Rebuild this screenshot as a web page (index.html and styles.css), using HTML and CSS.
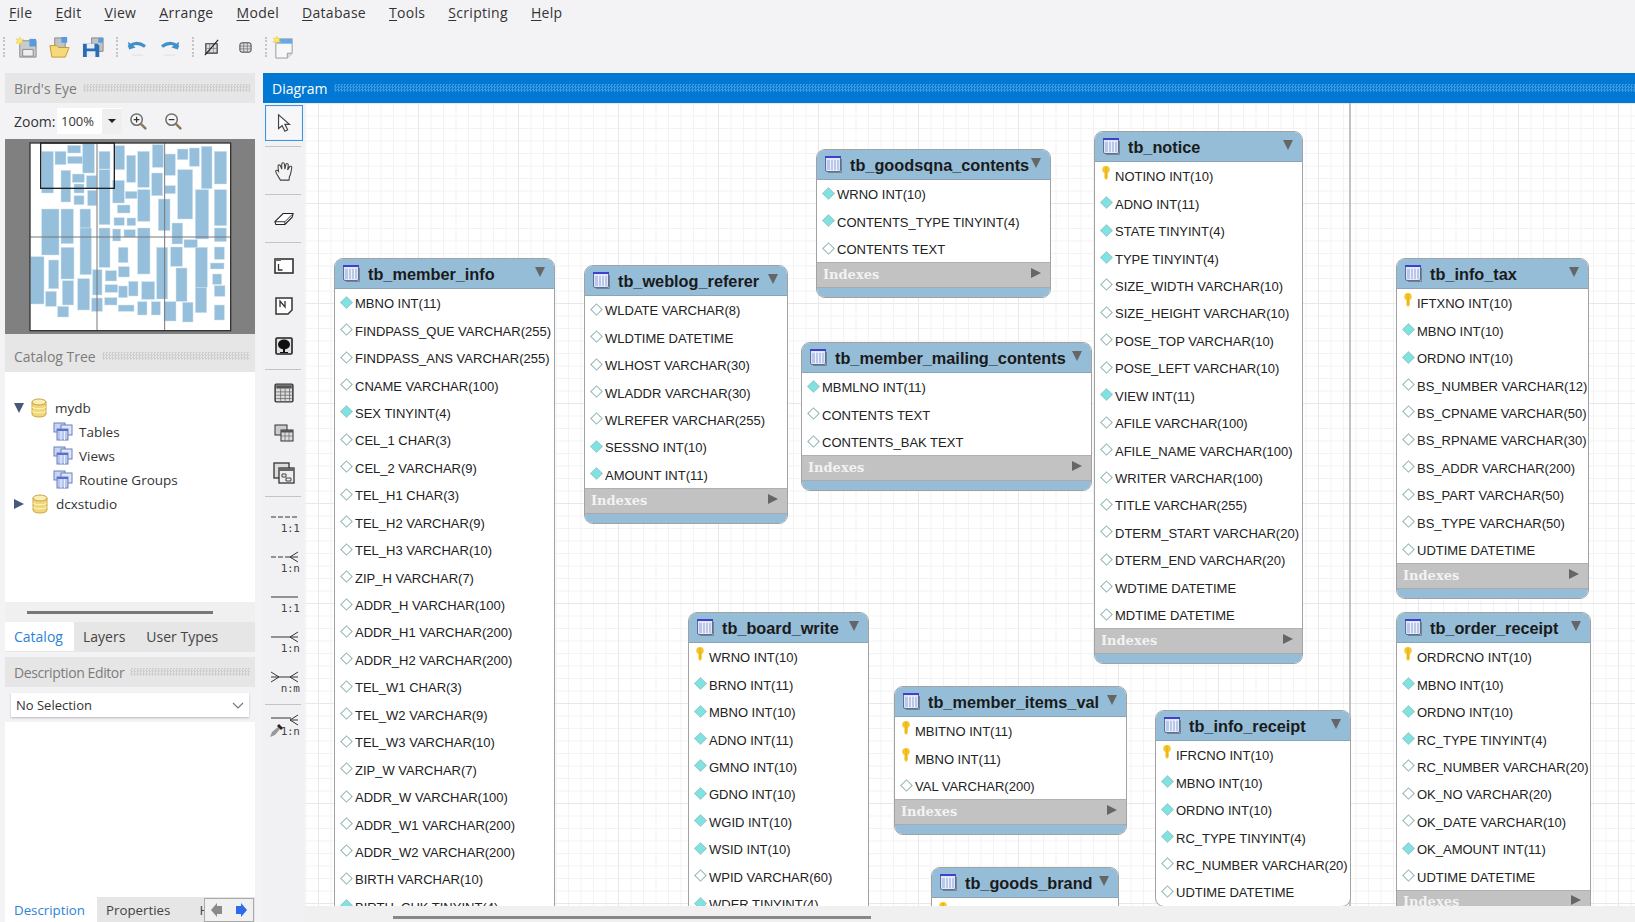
FILE: index.html
```html
<!DOCTYPE html>
<html lang="en">
<head>
<meta charset="utf-8">
<title>MySQL Workbench - EER Diagram</title>
<link rel="stylesheet" href="styles.css">
</head>
<body>
<svg class="defs" aria-hidden="true">
  <symbol id="key" viewBox="0 0 8 14"><path d="M4 0a3.800 3.800 0 0 1 3.800 3.800c0 1.600-.9 2.700-2 3.200v5L4 14l-1.600-2V7C1.100 6.500.2 5.400.2 3.800A3.800 3.800 0 0 1 4 0z" fill="#f6c72a"/><path d="M4 1v11" stroke="#e09f10" stroke-width=".8"/></symbol>
  <symbol id="tbl" viewBox="0 0 18 18"><rect x="1.500" y="1.500" width="15" height="15" rx="1.500" fill="#dfe6f5" stroke="#5a6f9a"/><rect x="1" y="1" width="16" height="2" fill="#3f3fd0"/><path d="M3 5h12v10H3z" fill="#b9c8ea"/><path d="M6.500 4v11.500M9.500 4v11.500M12.500 4v11.500" stroke="#eef2fb"/><path d="M4 17.500h13.500V4" stroke="#7b8188" fill="none"/></symbol>
  <symbol id="db" viewBox="0 0 16 20"><path d="M1 4v12c0 4 14 4 14 0V4z" fill="#f2d67a" stroke="#c9a440"/><ellipse cx="8" cy="4" rx="7" ry="3" fill="#fbeeb5" stroke="#c9a440"/><path d="M1 8.500c0 3 14 3 14 0M1 12.500c0 3 14 3 14 0" fill="none" stroke="#fff6c9"/></symbol>
  <symbol id="grp" viewBox="0 0 20 20"><rect x="1" y="1" width="11" height="9" fill="#c8d4f0" stroke="#6a80c0"/><rect x="8" y="3" width="11" height="10" fill="#dfe6f7" stroke="#6a80c0"/><rect x="4" y="7" width="11" height="11" fill="#b7c7ec" stroke="#6a80c0"/><path d="M4 7h11v2H4z" fill="#5b6fd0"/><path d="M8 9v9M11.500 9v9" stroke="#eef2fb"/></symbol>
  <symbol id="mag" viewBox="0 0 20 20"><circle cx="8" cy="8" r="6" fill="#f6f6f6" stroke="#6e6e6e" stroke-width="1.600"/><path d="M12.500 12.500l5.500 5.500" stroke="#8a7a55" stroke-width="2.600"/></symbol>
  <symbol id="crow" viewBox="0 0 30 12"><path d="M20 6l8-5M20 6h8M20 6l8 5" fill="none" stroke="#333"/></symbol>
</svg>

<nav class="menubar">
  <span><u>F</u>ile</span><span><u>E</u>dit</span><span><u>V</u>iew</span><span><u>A</u>rrange</span><span><u>M</u>odel</span><span><u>D</u>atabase</span><span><u>T</u>ools</span><span><u>S</u>cripting</span><span><u>H</u>elp</span>
</nav>

<div class="toolbar">
  <i class="grip"></i>
  <svg class="ti" viewBox="0 0 24 24"><path d="M5 5h17v17H5z" fill="#c9ccce" stroke="#8a8a8a"/><path d="M15 3h7v8h-7z" fill="#5a9be0"/><path d="M8 14h11v7H8z" fill="#eee" stroke="#888"/><path d="M5 1l1.200 2.600L9 3 7.200 5.200 9 7.500 6 7 5 9.500 4 7 1 7.500 2.800 5.200 1 3l2.800.6z" fill="#fbe96a" stroke="#e5c93a" stroke-width=".5"/></svg>
  <svg class="ti" viewBox="0 0 24 24"><path d="M7 2h11v12H7z" fill="#bfc3c6" stroke="#8a8a8a"/><path d="M14 1h6v6h-6z" fill="#5a9be0"/><path d="M2 10h7l2 2h11l-4 10H4z" fill="#f6d978" stroke="#c99a20"/></svg>
  <svg class="ti" viewBox="0 0 24 24"><path d="M10 2h12v14H10z" fill="#bfc3c6" stroke="#8a8a8a"/><path d="M17 2h5v5h-5z" fill="#5a9be0"/><path d="M1 8h15l2 2v12H1z" fill="#2b6cb5"/><path d="M5 8h8v5H5zM5 16h9v6H5z" fill="#e9eef5"/></svg>
  <i class="tsep"></i>
  <svg class="ti small" viewBox="0 0 22 18"><path d="M2 9c3-5 10-6 17-1" fill="none" stroke="#3f8fc9" stroke-width="3.400"/><path d="M1 3l1 8 7-2z" fill="#3f8fc9"/><path d="M5 17h12" stroke="#dedede"/></svg>
  <svg class="ti small" viewBox="0 0 22 18"><path d="M20 9C17 4 10 3 3 8" fill="none" stroke="#3f8fc9" stroke-width="3.400"/><path d="M21 3l-1 8-7-2z" fill="#3f8fc9"/><path d="M5 17h12" stroke="#dedede"/></svg>
  <i class="tsep"></i>
  <svg class="ti tiny" viewBox="0 0 18 18"><path d="M3 5h12v10H3z" fill="#ddd" stroke="#333" stroke-width="1.200"/><path d="M7 5v10M11 5v10M3 10h12" stroke="#777" stroke-width=".7"/><path d="M2 17L16 1" stroke="#222" stroke-width="1.300"/></svg>
  <svg class="ti grid" viewBox="0 0 14 14"><rect x="1" y="2" width="12" height="10" rx="2" fill="#ddd" stroke="#333"/><path d="M5 2v10M9 2v10M1 5.500h12M1 8.500h12" stroke="#666" stroke-width=".7"/></svg>
  <i class="tsep"></i>
  <svg class="ti note" viewBox="0 0 24 24"><path d="M4 3h17v15l-5 5H4z" fill="#f7f7f7" stroke="#9a9a9a"/><path d="M4 3h17v5H4z" fill="#6aa7e5"/><path d="M16 23v-5h5" fill="#ddd" stroke="#9a9a9a"/><path d="M5 0l1.200 2.600L9 2 7.200 4.200 9 6.500 6 6 5 8.500 4 6 1 6.500 2.800 4.200 1 2l2.800.6z" fill="#fbe96a" stroke="#e5c93a" stroke-width=".5"/></svg>
</div>

<main class="workspace">
  <aside class="sidebar">
    <header class="phead"><span>Bird's Eye</span><i class="dots"></i></header>
    <div class="zoomrow">
      <span class="zlabel">Zoom:</span>
      <div class="zbox"><span>100%</span><b class="zdrop"><i></i></b></div>
      <svg class="zicon" viewBox="0 0 20 20"><use href="#mag"/><path d="M5 8h6M8 5v6" stroke="#333" stroke-width="1.300"/></svg>
      <svg class="zicon" viewBox="0 0 20 20"><use href="#mag"/><path d="M5 8h6" stroke="#333" stroke-width="1.300"/></svg>
    </div>
    <svg class="birdseye" viewBox="15 28 750 585">
      <rect x="15" y="28" width="750" height="585" fill="#808080"/>
      <rect x="90" y="40" width="602" height="563" fill="#fff"/>
      <g class="be">
        <rect x="125" y="65" width="35" height="125"/><rect x="165" y="65" width="33" height="40"/><rect x="203" y="47" width="39" height="23"/><rect x="203" y="80" width="45" height="22"/><rect x="248" y="42" width="35" height="88"/><rect x="297" y="65" width="33" height="53"/><rect x="297" y="120" width="33" height="165"/><rect x="345" y="48" width="29" height="72"/><rect x="380" y="77" width="27" height="81"/><rect x="413" y="65" width="35" height="108"/><rect x="457" y="45" width="33" height="68"/><rect x="495" y="73" width="31" height="64"/><rect x="532" y="58" width="32" height="32"/><rect x="568" y="55" width="30" height="55"/><rect x="604" y="50" width="32" height="127"/><rect x="643" y="65" width="37" height="98"/><rect x="183" y="122" width="29" height="95"/><rect x="217" y="133" width="36" height="25"/><rect x="222" y="163" width="30" height="27"/><rect x="222" y="198" width="30" height="27"/><rect x="259" y="138" width="31" height="37"/><rect x="263" y="182" width="27" height="46"/><rect x="338" y="152" width="35" height="68"/><rect x="376" y="185" width="35" height="22"/><rect x="413" y="180" width="37" height="95"/><rect x="455" y="130" width="33" height="68"/><rect x="495" y="168" width="31" height="24"/><rect x="533" y="120" width="45" height="148"/><rect x="586" y="180" width="40" height="148"/><rect x="643" y="180" width="37" height="108"/><rect x="352" y="226" width="38" height="24"/><rect x="342" y="264" width="31" height="23"/><rect x="381" y="265" width="26" height="23"/><rect x="475" y="208" width="35" height="95"/><rect x="516" y="280" width="32" height="63"/><rect x="125" y="238" width="52" height="138"/><rect x="183" y="238" width="37" height="104"/><rect x="240" y="238" width="32" height="57"/><rect x="240" y="295" width="34" height="140"/><rect x="297" y="295" width="33" height="118"/><rect x="338" y="298" width="24" height="36"/><rect x="372" y="300" width="34" height="22"/><rect x="413" y="295" width="37" height="138"/><rect x="643" y="295" width="36" height="41"/><rect x="552" y="330" width="40" height="24"/><rect x="643" y="352" width="30" height="37"/><rect x="355" y="353" width="29" height="46"/><rect x="183" y="353" width="39" height="95"/><rect x="470" y="353" width="33" height="155"/><rect x="512" y="352" width="35" height="58"/><rect x="586" y="353" width="36" height="120"/><rect x="586" y="473" width="34" height="76"/><rect x="92" y="381" width="40" height="142"/><rect x="146" y="391" width="30" height="86"/><rect x="631" y="400" width="41" height="18"/><rect x="278" y="420" width="28" height="76"/><rect x="316" y="423" width="34" height="31"/><rect x="355" y="411" width="33" height="31"/><rect x="528" y="415" width="33" height="100"/><rect x="638" y="433" width="27" height="31"/><rect x="187" y="453" width="34" height="73"/><rect x="233" y="447" width="36" height="94"/><rect x="386" y="455" width="28" height="44"/><rect x="425" y="456" width="39" height="53"/><rect x="643" y="468" width="32" height="32"/><rect x="315" y="465" width="38" height="23"/><rect x="356" y="469" width="26" height="35"/><rect x="137" y="485" width="32" height="45"/><rect x="275" y="505" width="32" height="40"/><rect x="314" y="504" width="37" height="22"/><rect x="355" y="526" width="47" height="19"/><rect x="413" y="516" width="28" height="40"/><rect x="454" y="516" width="27" height="40"/><rect x="492" y="516" width="36" height="58"/><rect x="548" y="518" width="31" height="59"/><rect x="173" y="530" width="33" height="32"/><rect x="643" y="526" width="30" height="45"/>
      </g>
      <path d="M291 40v563M494 40v563M90 322h602" stroke="#777" stroke-width="3" fill="none"/>
      <rect x="90" y="40" width="602" height="563" fill="none" stroke="#333" stroke-width="4"/>
      <rect x="122" y="40" width="221" height="136" fill="none" stroke="#222" stroke-width="4"/>
    </svg>

    <header class="phead tall"><span>Catalog Tree</span><i class="dots"></i></header>
    <div class="tree">
      <div class="node"><i class="tw down"></i><svg class="dbi"><use href="#db"/></svg><span>mydb</span></div>
      <div class="node child"><svg class="gi"><use href="#grp"/></svg><span>Tables</span></div>
      <div class="node child"><svg class="gi"><use href="#grp"/></svg><span>Views</span></div>
      <div class="node child"><svg class="gi"><use href="#grp"/></svg><span>Routine Groups</span></div>
      <div class="node"><i class="tw right"></i><svg class="dbi"><use href="#db"/></svg><span>dcxstudio</span></div>
    </div>
    <div class="hscroll"><i></i></div>
    <div class="tabs">
      <span class="tab active">Catalog</span><span class="tab">Layers</span><span class="tab">User Types</span>
    </div>
    <header class="phead gapped"><span>Description Editor</span><i class="dots"></i></header>
    <div class="selrow"><div class="select"><span>No Selection</span><svg viewBox="0 0 12 7"><path d="M1 1l5 5 5-5" fill="none" stroke="#777" stroke-width="1.200"/></svg></div></div>
    <div class="desc"></div>
    <div class="tabs bottom">
      <span class="tab active">Description</span><span class="tab">Properties</span><span class="tab clipped">H</span>
      <div class="navbox">
        <svg viewBox="0 0 12 14"><path d="M11 3H6V0L0 7l6 7v-3h5z" fill="#8a8a8a"/></svg>
        <svg viewBox="0 0 12 14"><path d="M1 3h5V0l6 7-6 7v-3H1z" fill="#2f6be8"/></svg>
      </div>
    </div>
  </aside>

  <section class="diagram">
    <header class="dhead"><span>Diagram</span><i class="dots blue"></i></header>
    <div class="dbody">
      <div class="tools">
        <div class="tool selected"><svg viewBox="0 0 18 22"><path d="M3 2v15l4-3 3 6 3-1.500-3-6h5z" fill="#fff" stroke="#444" stroke-width="1.300"/></svg></div>
        <i class="sep"></i>
        <div class="tool wide"><svg viewBox="0 0 20 22"><path d="M6 21c-1-2-4-6-5-9-.5-2 1.500-2.500 3-.5L3.500 6c-.3-2 2-2.500 2.700-.5L7.500 9V3.500c0-2 2.800-2 3 0L11 9l1-5c.4-1.800 2.800-1.500 2.700.5L14 10l2-3.500c1-1.500 3-.5 2.500 1.200C18 10 17.500 15 16 17l-.5 4z" fill="#f4f4f4" stroke="#444" stroke-width="1.200"/></svg></div>
        <i class="sep"></i>
        <div class="tool wide"><svg viewBox="0 0 22 16"><path d="M1 11L10 2h11l-1 4-8 8H2z" fill="#fff" stroke="#222" stroke-width="1.200"/><path d="M1 11h11l8-8M12 11v3" fill="none" stroke="#222"/></svg></div>
        <i class="sep"></i>
        <div class="group">
          <div class="tool"><svg viewBox="0 0 20 18"><rect x="1" y="2" width="18" height="14" fill="#fff" stroke="#333" stroke-width="1.600"/><path d="M1 2h6v2H1z" fill="#666"/><path d="M4.500 7v6h4" fill="none" stroke="#333" stroke-width="1.300"/></svg></div>
          <div class="tool"><svg viewBox="0 0 20 20"><path d="M2 2h16v12l-4 4H2z" fill="#fff" stroke="#333" stroke-width="1.500"/><path d="M6 11V5l5 6V5" fill="none" stroke="#333" stroke-width="1.300"/></svg></div>
          <div class="tool"><svg viewBox="0 0 20 20"><rect x="2" y="2" width="16" height="16" rx="1" fill="#e2e2e2" stroke="#222" stroke-width="1.600"/><ellipse cx="10" cy="8.500" rx="6" ry="5" fill="#111"/><path d="M9 12h2v4H9zM6 16h8v1H6z" fill="#111"/></svg></div>
        </div>
        <i class="sep"></i>
        <div class="group">
          <div class="tool"><svg viewBox="0 0 18 18"><rect x="1" y="1" width="16" height="16" rx="1" fill="#ddd" stroke="#333" stroke-width="1.300"/><path d="M2 2h14v3H2z" fill="#555"/><path d="M6 5v11M10 5v11M14 5v11M2 8h14M2 11h14M2 14h14" stroke="#666" stroke-width=".7"/></svg></div>
          <div class="tool"><svg viewBox="0 0 20 18"><rect x="1" y="1" width="12" height="10" fill="#ccc" stroke="#333"/><rect x="7" y="6" width="12" height="11" fill="#ddd" stroke="#333"/><path d="M7 6h12v2.500H7z" fill="#555"/><path d="M11 8v9M15 8v9M7 12h12" stroke="#666" stroke-width=".7"/></svg></div>
          <div class="tool big"><svg viewBox="0 0 22 22"><rect x="1" y="1" width="15" height="15" fill="#ddd" stroke="#333" stroke-width="1.300"/><rect x="6" y="6" width="15" height="15" fill="#eee" stroke="#333" stroke-width="1.300"/><path d="M6 6h15v3H6z" fill="#666"/><path d="M9 12h4v3H9zM13 16h5v3h-5z" fill="none" stroke="#444"/></svg></div>
        </div>
        <i class="sep"></i>
        <div class="group rels">
          <div class="rel"><svg viewBox="0 0 30 6"><path d="M1 3h27" stroke="#333" stroke-dasharray="5 2"/></svg><b>1:1</b></div>
          <div class="rel"><svg viewBox="0 0 30 12"><use href="#crow"/><path d="M1 6h20" stroke="#333" stroke-dasharray="5 2"/></svg><b>1:n</b></div>
          <div class="rel"><svg viewBox="0 0 30 6"><path d="M1 3h27" stroke="#333"/></svg><b>1:1</b></div>
          <div class="rel"><svg viewBox="0 0 30 12"><use href="#crow"/><path d="M1 6h20" stroke="#333"/></svg><b>1:n</b></div>
          <div class="rel"><svg viewBox="0 0 30 12"><use href="#crow"/><path d="M1 6h20M9 6L1 1M9 6L1 11" stroke="#333" fill="none"/></svg><b>n:m</b></div>
        </div>
        <i class="sep"></i>
        <div class="rel pick"><svg viewBox="0 0 30 12"><use href="#crow"/><path d="M1 4h20" stroke="#333"/></svg><svg class="drop" viewBox="0 0 14 14"><path d="M1 13l2-5 6-5 2 2-5 6z" fill="#999"/><path d="M8 2l2-2 4 4-2 2z" fill="#222"/></svg><b>1:n</b></div>
      </div>

      <div class="canvaswrap">
        <div class="canvas">
          <i class="pageline"></i>

          <article class="tb t-member">
            <h3><svg><use href="#tbl"/></svg><span>tb_member_info</span><i class="tri"></i></h3>
            <ul>
              <li><i class="dm f"></i>MBNO INT(11)</li><li><i class="dm"></i>FINDPASS_QUE VARCHAR(255)</li><li><i class="dm"></i>FINDPASS_ANS VARCHAR(255)</li><li><i class="dm"></i>CNAME VARCHAR(100)</li><li><i class="dm f"></i>SEX TINYINT(4)</li><li><i class="dm"></i>CEL_1 CHAR(3)</li><li><i class="dm"></i>CEL_2 VARCHAR(9)</li><li><i class="dm"></i>TEL_H1 CHAR(3)</li><li><i class="dm"></i>TEL_H2 VARCHAR(9)</li><li><i class="dm"></i>TEL_H3 VARCHAR(10)</li><li><i class="dm"></i>ZIP_H VARCHAR(7)</li><li><i class="dm"></i>ADDR_H VARCHAR(100)</li><li><i class="dm"></i>ADDR_H1 VARCHAR(200)</li><li><i class="dm"></i>ADDR_H2 VARCHAR(200)</li><li><i class="dm"></i>TEL_W1 CHAR(3)</li><li><i class="dm"></i>TEL_W2 VARCHAR(9)</li><li><i class="dm"></i>TEL_W3 VARCHAR(10)</li><li><i class="dm"></i>ZIP_W VARCHAR(7)</li><li><i class="dm"></i>ADDR_W VARCHAR(100)</li><li><i class="dm"></i>ADDR_W1 VARCHAR(200)</li><li><i class="dm"></i>ADDR_W2 VARCHAR(200)</li><li><i class="dm"></i>BIRTH VARCHAR(10)</li><li><i class="dm f"></i>BIRTH_CHK TINYINT(4)</li>
            </ul>
          </article>

          <article class="tb t-weblog">
            <h3><svg><use href="#tbl"/></svg><span>tb_weblog_referer</span><i class="tri"></i></h3>
            <ul>
              <li><i class="dm"></i>WLDATE VARCHAR(8)</li><li><i class="dm"></i>WLDTIME DATETIME</li><li><i class="dm"></i>WLHOST VARCHAR(30)</li><li><i class="dm"></i>WLADDR VARCHAR(30)</li><li><i class="dm"></i>WLREFER VARCHAR(255)</li><li><i class="dm f"></i>SESSNO INT(10)</li><li><i class="dm f"></i>AMOUNT INT(11)</li>
            </ul>
            <div class="idx"><span>Indexes</span><i class="tri r"></i></div><div class="foot"></div>
          </article>

          <article class="tb t-qna">
            <h3><svg><use href="#tbl"/></svg><span>tb_goodsqna_contents</span><i class="tri"></i></h3>
            <ul>
              <li><i class="dm f"></i>WRNO INT(10)</li><li><i class="dm f"></i>CONTENTS_TYPE TINYINT(4)</li><li><i class="dm"></i>CONTENTS TEXT</li>
            </ul>
            <div class="idx"><span>Indexes</span><i class="tri r"></i></div><div class="foot"></div>
          </article>

          <article class="tb t-notice">
            <h3><svg><use href="#tbl"/></svg><span>tb_notice</span><i class="tri"></i></h3>
            <ul>
              <li><svg class="ky"><use href="#key"/></svg>NOTINO INT(10)</li><li><i class="dm f"></i>ADNO INT(11)</li><li><i class="dm f"></i>STATE TINYINT(4)</li><li><i class="dm f"></i>TYPE TINYINT(4)</li><li><i class="dm"></i>SIZE_WIDTH VARCHAR(10)</li><li><i class="dm"></i>SIZE_HEIGHT VARCHAR(10)</li><li><i class="dm"></i>POSE_TOP VARCHAR(10)</li><li><i class="dm"></i>POSE_LEFT VARCHAR(10)</li><li><i class="dm f"></i>VIEW INT(11)</li><li><i class="dm"></i>AFILE VARCHAR(100)</li><li><i class="dm"></i>AFILE_NAME VARCHAR(100)</li><li><i class="dm"></i>WRITER VARCHAR(100)</li><li><i class="dm"></i>TITLE VARCHAR(255)</li><li><i class="dm"></i>DTERM_START VARCHAR(20)</li><li><i class="dm"></i>DTERM_END VARCHAR(20)</li><li><i class="dm"></i>WDTIME DATETIME</li><li><i class="dm"></i>MDTIME DATETIME</li>
            </ul>
            <div class="idx"><span>Indexes</span><i class="tri r"></i></div><div class="foot"></div>
          </article>

          <article class="tb t-mailing">
            <h3><svg><use href="#tbl"/></svg><span>tb_member_mailing_contents</span><i class="tri"></i></h3>
            <ul>
              <li><i class="dm f"></i>MBMLNO INT(11)</li><li><i class="dm"></i>CONTENTS TEXT</li><li><i class="dm"></i>CONTENTS_BAK TEXT</li>
            </ul>
            <div class="idx"><span>Indexes</span><i class="tri r"></i></div><div class="foot"></div>
          </article>

          <article class="tb t-tax">
            <h3><svg><use href="#tbl"/></svg><span>tb_info_tax</span><i class="tri"></i></h3>
            <ul>
              <li><svg class="ky"><use href="#key"/></svg>IFTXNO INT(10)</li><li><i class="dm f"></i>MBNO INT(10)</li><li><i class="dm f"></i>ORDNO INT(10)</li><li><i class="dm"></i>BS_NUMBER VARCHAR(12)</li><li><i class="dm"></i>BS_CPNAME VARCHAR(50)</li><li><i class="dm"></i>BS_RPNAME VARCHAR(30)</li><li><i class="dm"></i>BS_ADDR VARCHAR(200)</li><li><i class="dm"></i>BS_PART VARCHAR(50)</li><li><i class="dm"></i>BS_TYPE VARCHAR(50)</li><li><i class="dm"></i>UDTIME DATETIME</li>
            </ul>
            <div class="idx"><span>Indexes</span><i class="tri r"></i></div><div class="foot"></div>
          </article>

          <article class="tb t-order">
            <h3><svg><use href="#tbl"/></svg><span>tb_order_receipt</span><i class="tri"></i></h3>
            <ul>
              <li><svg class="ky"><use href="#key"/></svg>ORDRCNO INT(10)</li><li><i class="dm f"></i>MBNO INT(10)</li><li><i class="dm f"></i>ORDNO INT(10)</li><li><i class="dm f"></i>RC_TYPE TINYINT(4)</li><li><i class="dm"></i>RC_NUMBER VARCHAR(20)</li><li><i class="dm"></i>OK_NO VARCHAR(20)</li><li><i class="dm"></i>OK_DATE VARCHAR(10)</li><li><i class="dm f"></i>OK_AMOUNT INT(11)</li><li><i class="dm"></i>UDTIME DATETIME</li>
            </ul>
            <div class="idx"><span>Indexes</span><i class="tri r"></i></div><div class="foot"></div>
          </article>

          <article class="tb t-board">
            <h3><svg><use href="#tbl"/></svg><span>tb_board_write</span><i class="tri"></i></h3>
            <ul>
              <li><svg class="ky"><use href="#key"/></svg>WRNO INT(10)</li><li><i class="dm f"></i>BRNO INT(11)</li><li><i class="dm f"></i>MBNO INT(10)</li><li><i class="dm f"></i>ADNO INT(11)</li><li><i class="dm f"></i>GMNO INT(10)</li><li><i class="dm f"></i>GDNO INT(10)</li><li><i class="dm f"></i>WGID INT(10)</li><li><i class="dm f"></i>WSID INT(10)</li><li><i class="dm"></i>WPID VARCHAR(60)</li><li><i class="dm f"></i>WDER TINYINT(4)</li>
            </ul>
          </article>

          <article class="tb t-items">
            <h3><svg><use href="#tbl"/></svg><span>tb_member_items_val</span><i class="tri"></i></h3>
            <ul>
              <li><svg class="ky"><use href="#key"/></svg>MBITNO INT(11)</li><li><svg class="ky"><use href="#key"/></svg>MBNO INT(11)</li><li><i class="dm"></i>VAL VARCHAR(200)</li>
            </ul>
            <div class="idx"><span>Indexes</span><i class="tri r"></i></div><div class="foot"></div>
          </article>

          <article class="tb t-receipt">
            <h3><svg><use href="#tbl"/></svg><span>tb_info_receipt</span><i class="tri"></i></h3>
            <ul>
              <li><svg class="ky"><use href="#key"/></svg>IFRCNO INT(10)</li><li><i class="dm f"></i>MBNO INT(10)</li><li><i class="dm f"></i>ORDNO INT(10)</li><li><i class="dm f"></i>RC_TYPE TINYINT(4)</li><li><i class="dm"></i>RC_NUMBER VARCHAR(20)</li><li><i class="dm"></i>UDTIME DATETIME</li>
            </ul>
          </article>

          <article class="tb t-brand">
            <h3><svg><use href="#tbl"/></svg><span>tb_goods_brand</span><i class="tri"></i></h3>
            <ul>
              <li><svg class="ky"><use href="#key"/></svg>BRNO INT(10)</li>
            </ul>
          </article>
        </div>
        <div class="cscroll"><i></i></div>
      </div>
    </div>
  </section>
</main>
</body>
</html>
```
FILE: styles.css
```css
* { box-sizing: border-box; }
html, body { margin: 0; height: 100%; overflow: hidden; }
body {
  width: 1635px; height: 922px;
  background: #f3f3f6;
  font-family: "Open Sans", "Noto Sans", sans-serif;
  font-size: 14px;
  color: #333;
  display: flex; flex-direction: column;
}
i { display: block; font-style: normal; }
.defs { position: absolute; width: 0; height: 0; }

.menubar { height: 25px; display: flex; align-items: center; gap: 23px; padding-left: 9px; font-size: 14px; letter-spacing: .3px; color: #333; }
.menubar u { text-underline-offset: 2px; }

.toolbar { height: 48px; display: flex; align-items: center; padding: 0 0 4px 3px; }
.grip { width: 2px; height: 20px; border-left: 2px dotted #c4c4c8; margin-right: 9.500px; flex: none; }
.ti { width: 23px; height: 23px; margin-right: 10.500px; flex: none; }
.ti.small { width: 21px; height: 17px; margin: 0 11px 0 0; }
.ti.tiny { width: 17px; height: 17px; margin: 0 18.500px 0 0; }
.ti.grid { width: 13px; height: 13px; margin: 0 12px 0 0; }
.ti.note { margin-left: -4px; }
.tsep { width: 2px; height: 20px; border-left: 2px dotted #c4c4c8; margin: 0 9px 0 1px; flex: none; }

.workspace { flex: 1; display: flex; gap: 8px; padding-left: 5px; min-height: 0; }

.sidebar { width: 250px; display: flex; flex-direction: column; }
.phead { height: 30px; background: #e6e6e6; display: flex; align-items: center; gap: 6px; padding: 0 5px 0 9px; color: #7c7c7c; font-size: 14px; white-space: nowrap; }
.phead.tall { height: 38px; padding-top: 6px; }
.phead.gapped { margin-top: 5px; letter-spacing: -.4px; }
.dots { flex: 1; height: 8px; background: repeating-conic-gradient(#cfcfcf 0 25%, transparent 0 50%) 0 0 / 3px 3px; }
.dots.blue { background: repeating-conic-gradient(#3d9ae0 0 25%, transparent 0 50%) 0 0 / 3px 3px; }

.zoomrow { height: 36px; display: flex; align-items: center; padding-left: 9px; }
.zlabel { width: 43px; }
.zbox { width: 65px; height: 26px; background: #fff; display: flex; align-items: center; justify-content: space-between; padding-left: 4px; font-size: 13px; }
.zdrop { width: 20px; height: 25px; background: #efefef; display: flex; align-items: center; justify-content: center; }
.zdrop i { border: 4px solid transparent; border-top: 4px solid #222; border-bottom: 0; }
.zicon { width: 19px; height: 19px; margin-left: 16px; }
.zbox + .zicon { margin-left: 7px; }

.birdseye { width: 250px; height: 195px; display: block; flex: none; }
.be rect { fill: #95bfdb; stroke: #cfe2ef; stroke-width: 1.500; }

.tree { height: 230px; background: #fff; padding-top: 24px; font-size: 13.500px; color: #333; }
.node { height: 24px; display: flex; align-items: center; padding-left: 9px; }
.node.child { padding-left: 48px; }
.tw { width: 0; height: 0; }
.tw.down { border: 5.500px solid transparent; border-top: 10px solid #47597a; border-bottom: 0; margin-right: 7px; }
.tw.right { border: 5.500px solid transparent; border-left: 10px solid #47597a; border-right: 0; margin: 0 8px 0 0; }
.dbi { width: 16px; height: 20px; margin-right: 8px; }
.gi { width: 20px; height: 20px; margin-right: 6px; }

.hscroll { height: 20px; display: flex; align-items: center; padding-left: 22px; background: #f0f0f0; }
.hscroll i { width: 186px; height: 3px; background: #777; }

.tabs { height: 30px; display: flex; background: #e6e6e6; padding-bottom: 1px; }
.tab { display: flex; align-items: center; padding: 0 9px; color: #444; margin-right: 3px; white-space: nowrap; }
.tab.active { background: #fff; color: #2b84d6; margin-right: 0; width: 69px; flex: none; }

.selrow { height: 35px; padding: 6px 6px 5px 6px; }
.select { height: 24px; background: #fff; box-shadow: 0 1px 2px rgba(0,0,0,.25); display: flex; align-items: center; justify-content: space-between; padding: 0 5px; color: #333; font-size: 13px; }
.select svg { width: 12px; height: 7px; }

.desc { flex: 1; background: #fff; }
.tabs.bottom { height: 25px; position: relative; overflow: hidden; font-size: 13.300px; padding-bottom: 0; }
.tabs.bottom .tab.active { width: 92px; }
.tab.clipped { padding-left: 17px; margin: 0; }
.navbox { position: absolute; right: 1px; top: 1px; width: 50px; height: 24px; background: #f0f0f0; border: 1px solid #aaa; display: flex; align-items: center; justify-content: space-around; }
.navbox svg { width: 12px; height: 14px; }

.diagram { flex: 1; display: flex; flex-direction: column; min-width: 0; }
.dhead { height: 30px; background: #0078d4; color: #fff; display: flex; align-items: center; gap: 6px; padding: 0 0 0 9px; font-size: 14px; }
.dbody { flex: 1; display: flex; min-height: 0; }

.tools { width: 42px; flex: none; background: #f1f1f4; display: flex; flex-direction: column; align-items: flex-start; padding-top: 2px; }
.tool { width: 38px; height: 40px; margin-left: 2px; display: flex; align-items: center; justify-content: center; flex: none; }
.tool svg { width: 20px; height: 20px; }
.tool.selected { height: 36px; border: 1px solid #3d93dc; box-shadow: inset 0 0 0 1px #e6f1fb; margin-bottom: 5px; background: #f7f7fa; }
.tool.wide { height: 47px; }
.tool.big svg { width: 22px; height: 22px; }
.sep { width: 36px; height: 1px; background: #c4c4c4; margin-left: 2px; flex: none; }
.group { padding: 3px 0; flex: none; }
.rels { padding: 5px 0 2px; }
.rel { width: 42px; height: 40px; display: flex; flex-direction: column; align-items: center; position: relative; flex: none; padding-top: 9px; }
.rel svg { width: 30px; height: 12px; margin-left: 1px; flex: none; }
.rel b { font: 400 11px/12px "DejaVu Sans Mono", monospace; color: #444; width: 31px; text-align: right; letter-spacing: -.4px; margin-top: 0; }
.pick .drop { position: absolute; left: 6px; top: 19px; width: 14px; height: 14px; margin: 0; }

.canvaswrap { flex: 1; min-width: 0; display: flex; flex-direction: column; }
.canvas {
  flex: 1; position: relative; overflow: hidden; background-color: #fff;
  background-image:
    linear-gradient(to right, #e8e8e8 1px, transparent 1px),
    linear-gradient(to bottom, #e8e8e8 1px, transparent 1px),
    linear-gradient(to right, #f3f3f3 1px, transparent 1px),
    linear-gradient(to bottom, #f3f3f3 1px, transparent 1px);
  background-size: 100px 100px, 100px 100px, 12.500px 12.500px, 12.500px 12.500px;
  background-position: 13px 0, 0 0, 0.500px 0, 0 0;
}
.cscroll { height: 16px; background: #f0f0f0; position: relative; flex: none; }
.cscroll i { position: absolute; left: 88px; top: 10px; width: 478px; height: 3px; background: #888; }
.pageline { position: absolute; left: 1044px; top: 0; bottom: 0; width: 2px; background: #c2c2c2; }

.tb { position: absolute; border: 1px solid #a2a2a2; border-radius: 9px; background: #fff; overflow: hidden; }
.tb h3 { margin: 0; height: 30px; background: #95bdd8; border-bottom: 1px solid #8aa3b5; display: flex; align-items: center; padding-left: 7px; font: 700 16.300px "Liberation Sans", sans-serif; color: #1a1a1a; white-space: nowrap; }
.tb h3 svg { width: 18px; height: 18px; flex: none; margin: 0 8px 2px 0; }
.tb h3 span { flex: 1; min-width: 0; padding-top: 2px; }
.tri { width: 0; height: 0; flex: none; border: 5.500px solid transparent; border-top: 10px solid #666; border-bottom: 0; margin: -4px 9px 0 0; }
.tri.r { border: 5px solid transparent; border-left: 10px solid #666; border-right: 0; margin: -3px 9px 0 0; }
.tb ul { list-style: none; margin: 0; padding: 0; }
.tb li { height: 27.450px; padding-top: 2px; display: flex; align-items: center; font: 400 13px "Liberation Sans", sans-serif; color: #222; white-space: nowrap; }
.dm { width: 9px; height: 9px; flex: none; margin: -3px 4.500px 0 6.500px; transform: rotate(45deg); border: 1px solid #8fb5b5; background: #fff; }
.dm.f { background: #7fe3e3; border-color: #9cc; }
.ky { width: 8px; height: 14px; flex: none; margin: -8px 5px 0 7px; }
.idx { height: 26px; padding-bottom: 2px; background: #c2c2c2; border-top: 1px solid #b0b0b0; border-bottom: 1px solid #aaa; display: flex; align-items: center; justify-content: space-between; padding-left: 6px; font: 700 13px "DejaVu Serif", serif; color: #f2f2f2; }
.foot { height: 9px; background: #95bdd8; }

.t-member  { left: 29px;   top: 155px; width: 221px; }
.t-weblog  { left: 279px;  top: 162px; width: 204px; }
.t-qna     { left: 511px;  top: 46px;  width: 235px; }
.t-notice  { left: 789px;  top: 28px;  width: 209px; }
.t-mailing { left: 496px;  top: 239px; width: 291px; }
.t-tax     { left: 1091px; top: 155px; width: 193px; }
.t-order   { left: 1091px; top: 509px; width: 195px; }
.t-board   { left: 383px;  top: 509px; width: 181px; }
.t-items   { left: 589px;  top: 583px; width: 233px; }
.t-receipt { left: 850px;  top: 607px; width: 196px; }
.t-brand   { left: 626px;  top: 764px; width: 188px; }
```
